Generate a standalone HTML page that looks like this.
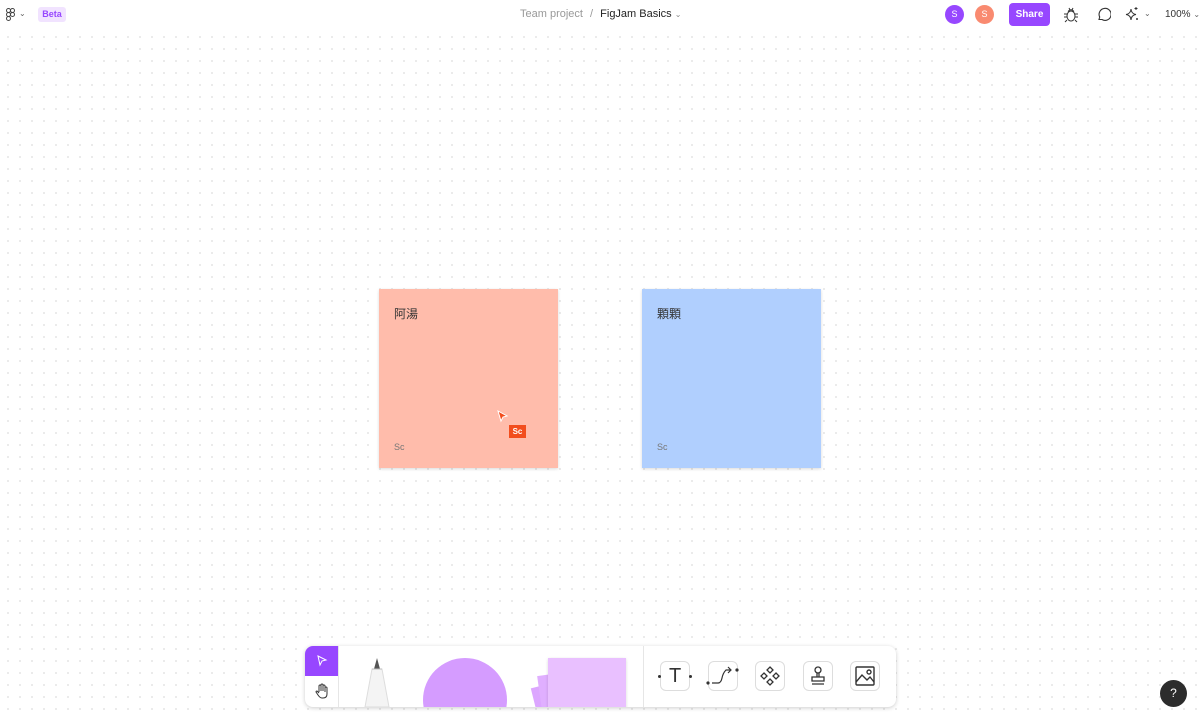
<!DOCTYPE html>
<html><head><meta charset="utf-8"><style>
*{margin:0;padding:0;box-sizing:border-box}
body{width:1200px;height:720px;overflow:hidden;background:#fff;font-family:"Liberation Sans","Noto Sans CJK TC",sans-serif;position:relative}
.grid{position:absolute;left:0;top:30px;width:1200px;height:690px;background-image:radial-gradient(circle,#e4e4e4 0.8px,transparent 1px);background-size:12px 12px;background-position:2px 1px}
.top{position:absolute;left:0;top:0;width:1200px;height:30px;background:#fff}
.abs{position:absolute;white-space:nowrap}
.note{position:absolute;width:179px;height:179px;box-shadow:0 1px 3px rgba(0,0,0,.15)}
.note .t{position:absolute;left:15px;top:16px;font-size:12px;color:#333}
.note .s{position:absolute;left:15px;top:153px;font-size:9px;color:#777}
.tb{position:absolute;left:305px;top:646px;width:591px;height:61px;background:#fff;border-radius:8px;box-shadow:0 1px 4px rgba(0,0,0,.2);overflow:hidden}
.ib{position:absolute;top:15px;width:30px;height:30px;border:1px solid #ddd;border-radius:6px}
</style></head><body>
<div class="grid"></div>
<div class="top">
<svg class="abs" style="left:5px;top:8px" width="12" height="13" viewBox="0 0 12 13" fill="none" stroke="#444" stroke-width="1"><rect x="1.5" y="0.5" width="4" height="4" rx="2"/><rect x="5.5" y="0.5" width="4" height="4" rx="2"/><rect x="1.5" y="4.5" width="4" height="4" rx="2"/><circle cx="7.5" cy="6.5" r="2"/><rect x="1.5" y="8.5" width="4" height="4" rx="2"/></svg>
<div class="abs" style="left:19px;top:9px;font-size:8px;color:#666">⌄</div>
<div class="abs" style="left:38px;top:7px;width:28px;height:15px;background:#f1e3ff;border-radius:3px;color:#9747ff;font-size:9px;font-weight:bold;text-align:center;line-height:15px">Beta</div>
<div class="abs" style="left:520px;top:8px;font-size:11px;color:#999">Team project <span style="margin:0 4px">/</span> <span style="color:#222">FigJam Basics</span> <span style="font-size:8px;color:#888">⌄</span></div>
<div class="abs" style="left:945px;top:5px;width:19px;height:19px;border-radius:50%;background:#9747ff;color:#fff;font-size:9px;text-align:center;line-height:19px">S</div>
<div class="abs" style="left:975px;top:5px;width:19px;height:19px;border-radius:50%;background:#f98a70;color:#fff;font-size:9px;text-align:center;line-height:19px">S</div>
<div class="abs" style="left:1009px;top:3px;width:41px;height:23px;border-radius:4px;background:#9747ff;color:#fff;font-size:10px;font-weight:bold;text-align:center;line-height:23px">Share</div>
<svg class="abs" style="left:1063px;top:6px" width="16" height="17" viewBox="0 0 16 17" fill="none" stroke="#333" stroke-width="1"><ellipse cx="8" cy="10" rx="4" ry="5"/><path d="M5 5.5Q8 2 11 5.5M4 8H1M12 8h3M4 11H1M12 11h3M4 14l-2 2M12 14l2 2M6 2l1 2M10 2l-1 2"/></svg>
<svg class="abs" style="left:1096px;top:7px" width="15" height="15" viewBox="0 0 15 15" fill="none" stroke="#333" stroke-width="1.1"><path d="M3 12.5l.7-2.5A6 6 0 1 1 6 12.5Z"/></svg>
<svg class="abs" style="left:1124px;top:6px" width="16" height="16" viewBox="0 0 16 16" fill="none" stroke="#333" stroke-width="1"><path d="M7 3Q7.5 8 12 8.5Q7.5 9 7 14Q6.5 9 2 8.5Q6.5 8 7 3Z"/><path d="M12 1v3M10.5 2.5h3M13 12v2M12 13h2"/></svg>
<div class="abs" style="left:1144px;top:9px;font-size:8px;color:#666">⌄</div>
<div class="abs" style="left:1165px;top:9px;font-size:10px;color:#333">100% <span style="font-size:8px;color:#666">⌄</span></div>
</div>
<div class="note" style="left:379px;top:289px;background:#ffbcab"><div class="t">阿湯</div><div class="s">Sc</div></div>
<div class="note" style="left:642px;top:289px;background:#b0cffe"><div class="t">顆顆</div><div class="s">Sc</div></div>
<svg class="abs" style="left:497px;top:410px" width="12" height="13" viewBox="0 0 12 13"><path d="M1 1L10 6L6 7L4 11Z" fill="#f24e1e" stroke="#fff" stroke-width="1"/></svg>
<div class="abs" style="left:509px;top:425px;width:17px;height:13px;background:#f24e1e;color:#fff;font-size:8px;font-weight:bold;text-align:center;line-height:13px">Sc</div>
<div class="tb">
<div class="abs" style="left:0;top:0;width:33px;height:30px;background:#9747ff"></div>
<svg class="abs" style="left:11px;top:9px" width="12" height="12" viewBox="0 0 12 12" fill="none" stroke="#fff" stroke-width="1"><path d="M2 1L10 5L6 6L4 10Z"/></svg>
<svg class="abs" style="left:10px;top:37px" width="14" height="16" viewBox="0 0 14 16" fill="none" stroke="#333" stroke-width="1"><path d="M4 9V3a1 1 0 0 1 2 0v5V2a1 1 0 0 1 2 0v6V3a1 1 0 0 1 2 0v6V5a1 1 0 0 1 2 0v6q0 4-4 4H7q-2 0-4-3L1 9q0-1 1-1l2 2"/></svg>
<div class="abs" style="left:33px;top:0;width:1px;height:61px;background:#e6e6e6"></div>
<svg class="abs" style="left:55px;top:11px" width="35" height="50" viewBox="0 0 35 50"><path d="M12 12L5 50H29L22 12Z" fill="#f4f4f4" stroke="#ddd"/><path d="M14 12L17 1L20 12Z" fill="#555"/><path d="M12 12h10" stroke="#bbb"/></svg>
<div class="abs" style="left:118px;top:12px;width:84px;height:84px;border-radius:50%;background:#d59cff"></div>
<div class="abs" style="left:232px;top:33px;width:70px;height:60px;background:#dca6ff;transform:rotate(-14deg)"></div>
<div class="abs" style="left:236px;top:25px;width:70px;height:60px;background:#e0afff;transform:rotate(-8deg)"></div>
<div class="abs" style="left:243px;top:12px;width:78px;height:60px;background:#e9c0ff;box-shadow:0 1px 3px rgba(0,0,0,.15)"></div>
<div class="abs" style="left:338px;top:0;width:1px;height:61px;background:#e6e6e6"></div>
<div class="ib" style="left:355px"></div>
<div class="abs" style="left:364px;top:19px;font-size:20px;color:#333;line-height:22px">T</div>
<div class="abs" style="left:353px;top:29px;width:3px;height:3px;background:#333;border-radius:50%"></div>
<div class="abs" style="left:384px;top:29px;width:3px;height:3px;background:#333;border-radius:50%"></div>
<div class="ib" style="left:403px"></div>
<svg class="abs" style="left:400px;top:17px" width="36" height="28" viewBox="0 0 36 28" fill="none" stroke="#333" stroke-width="1.2"><path d="M7 20h6q3 0 4-5t4-8h5M23 4l3 3-3 3"/><circle cx="3" cy="20" r="1" fill="#333"/><circle cx="32" cy="7" r="1" fill="#333"/></svg>
<div class="ib" style="left:450px"></div>
<svg class="abs" style="left:454px;top:19px" width="22" height="22" viewBox="0 0 22 22" fill="none" stroke="#333" stroke-width="1.3"><path d="M11 2l3 3-3 3-3-3zM5 8l3 3-3 3-3-3zM17 8l3 3-3 3-3-3zM11 14l3 3-3 3-3-3z"/></svg>
<div class="ib" style="left:498px"></div>
<svg class="abs" style="left:503px;top:19px" width="20" height="22" viewBox="0 0 20 22" fill="none" stroke="#333" stroke-width="1.3"><circle cx="10" cy="5" r="3"/><path d="M9 8v4M11 8v4M4 12h12v4H4zM4 19h12"/></svg>
<div class="ib" style="left:545px"></div>
<svg class="abs" style="left:549px;top:19px" width="22" height="22" viewBox="0 0 22 22" fill="none" stroke="#333" stroke-width="1.4"><rect x="2" y="2" width="18" height="18" rx="1"/><path d="M2 17l6-7 5 5 3-3 4 5"/><circle cx="15" cy="7" r="2"/></svg>
</div>
<div class="abs" style="left:1160px;top:680px;width:27px;height:27px;border-radius:50%;background:#2c2c2c;color:#fff;font-size:12px;text-align:center;line-height:27px">?</div>
</body></html>
